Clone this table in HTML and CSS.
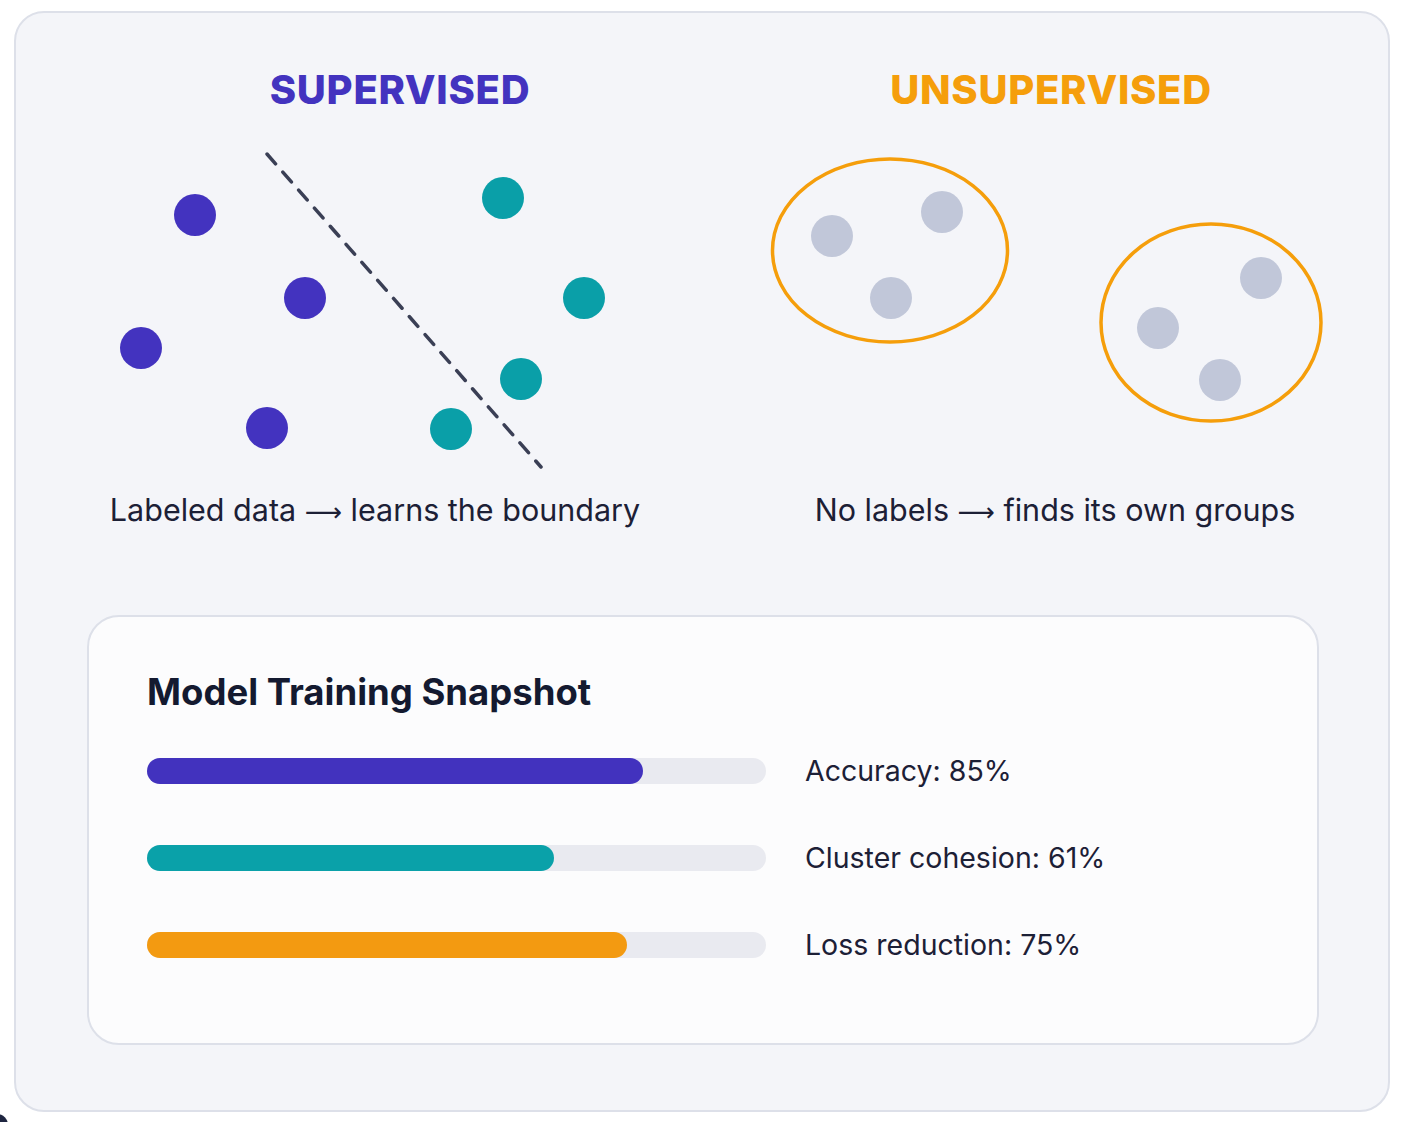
FILE: index.html
```html
<!DOCTYPE html>
<html lang="en">
<head>
<meta charset="utf-8">
<title>Supervised vs Unsupervised</title>
<link rel="stylesheet" href="styles.css">
</head>
<body>
<div class="corner"></div>
<main class="card">
  <div class="titles">
    <h2 class="title title-sup">SUPERVISED</h2>
    <h2 class="title title-unsup">UNSUPERVISED</h2>
  </div>
  <svg class="diagram" viewBox="16 114 1372 378" width="1372" height="378" aria-hidden="true">
    <line x1="267" y1="154" x2="541" y2="467" stroke="#3a3f55" stroke-width="3.5" stroke-dasharray="13 11" stroke-linecap="round"/>
    <g fill="#4333bf">
      <circle cx="195" cy="215" r="21"/>
      <circle cx="305" cy="298" r="21"/>
      <circle cx="141" cy="348" r="21"/>
      <circle cx="267" cy="428" r="21"/>
    </g>
    <g fill="#0a9fa8">
      <circle cx="503" cy="198" r="21"/>
      <circle cx="584" cy="298" r="21"/>
      <circle cx="521" cy="379" r="21"/>
      <circle cx="451" cy="429" r="21"/>
    </g>
    <g fill="none" stroke="#f59e0b" stroke-width="3.5">
      <ellipse cx="890" cy="250.5" rx="117.5" ry="91.5"/>
      <ellipse cx="1211" cy="322.5" rx="110" ry="98.5"/>
    </g>
    <g fill="#c1c7d9">
      <circle cx="832" cy="236" r="21"/>
      <circle cx="942" cy="212" r="21"/>
      <circle cx="891" cy="298" r="21"/>
      <circle cx="1158" cy="328" r="21"/>
      <circle cx="1261" cy="278" r="21"/>
      <circle cx="1220" cy="380" r="21"/>
    </g>
  </svg>
  <div class="captions">
    <p class="caption">Labeled data <span class="arrow">⟶</span> learns the boundary</p>
    <p class="caption">No labels <span class="arrow">⟶</span> finds its own groups</p>
  </div>
  <section class="snapshot">
    <h3 class="snapshot-title">Model Training Snapshot</h3>
    <div class="metrics">
      <div class="metric">
        <div class="track"><div class="fill fill-indigo" style="width: 496px"></div></div>
        <span class="metric-label">Accuracy: 85%</span>
      </div>
      <div class="metric">
        <div class="track"><div class="fill fill-teal" style="width: 407px"></div></div>
        <span class="metric-label">Cluster cohesion: 61%</span>
      </div>
      <div class="metric">
        <div class="track"><div class="fill fill-orange" style="width: 480px"></div></div>
        <span class="metric-label">Loss reduction: 75%</span>
      </div>
    </div>
  </section>
</main>
</body>
</html>
```

FILE: styles.css
```css
* { box-sizing: border-box; }

html, body {
  margin: 0;
  padding: 0;
  background: #ffffff;
}

body {
  font-family: Inter, "Noto Sans", "Liberation Sans", sans-serif;
  color: #1c2036;
  padding: 11px 0 0 14px;
}

.corner {
  position: fixed;
  left: -14px;
  bottom: -14px;
  width: 22px;
  height: 22px;
  border-radius: 50%;
  background: #1e2540;
}

.card {
  width: 1376px;
  height: 1101px;
  background: #f4f5f9;
  border: 2px solid #dde0e9;
  border-radius: 30px;
  padding-top: 53px;
}

.titles {
  display: grid;
  grid-template-columns: 600px 600px;
  column-gap: 51px;
  margin-left: 84px;
}

.title {
  margin: 0;
  text-align: center;
  font-size: 40px;
  line-height: 48px;
  font-weight: 800;
  letter-spacing: 0.7px;
}

.title-sup { color: #4333bf; }
.title-unsup { color: #f59e0b; }

.diagram {
  display: block;
}

.captions {
  display: grid;
  grid-template-columns: 600px 600px;
  column-gap: 80px;
  margin-left: 59px;
}

.caption {
  margin: 0;
  text-align: center;
  font-size: 30.5px;
  line-height: 36px;
  font-weight: 400;
  color: #1c2036;
}

.arrow {
  font-family: "DejaVu Sans", sans-serif;
  font-size: 26px;
}

.snapshot {
  margin: 85px 0 0 71px;
  width: 1232px;
  height: 430px;
  background: #fcfcfd;
  border: 2px solid #dde0e9;
  border-radius: 32px;
  padding: 53px 0 0 58px;
}

.snapshot-title {
  margin: 0;
  font-size: 36.5px;
  line-height: 44px;
  font-weight: 700;
  color: #141a30;
  letter-spacing: 0;
}

.metrics {
  display: flex;
  flex-direction: column;
  gap: 43px;
  margin-top: 35px;
}

.metric {
  display: flex;
  align-items: center;
  height: 44px;
}

.track {
  width: 619px;
  height: 26px;
  border-radius: 13px;
  background: #e9eaf0;
  flex: none;
}

.fill {
  height: 100%;
  border-radius: 13px;
}

.fill-indigo { background: #4232be; }
.fill-teal { background: #0aa1a9; }
.fill-orange { background: #f39a11; }

.metric-label {
  margin-left: 39px;
  font-size: 28.5px;
  line-height: 36px;
  color: #1c2036;
}
```
